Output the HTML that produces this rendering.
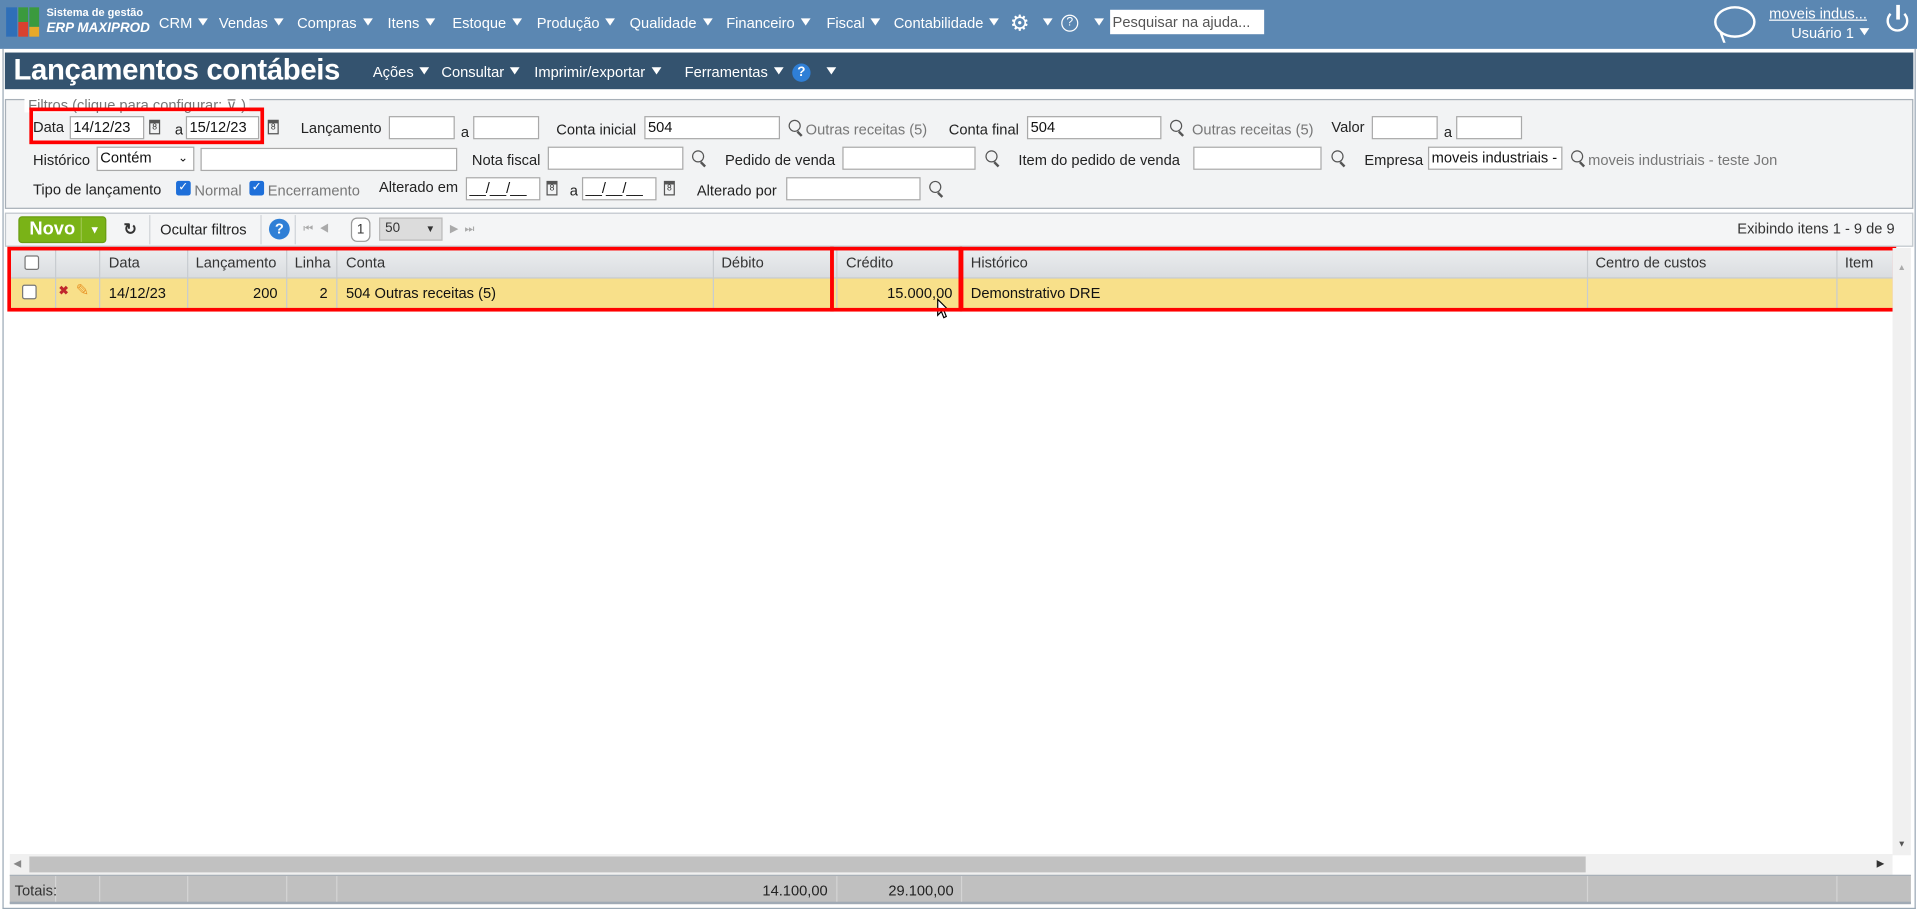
<!DOCTYPE html>
<html><head><meta charset="utf-8"><style>
html,body{margin:0;padding:0;overflow:hidden;width:1917px;height:909px;background:#fff}
#s{position:absolute;left:0;top:0;width:1568px;height:744px;transform:scale(1.22258,1.2218);transform-origin:0 0;font-family:"Liberation Sans",sans-serif;font-size:12px;color:#333;background:#fff}
.a{position:absolute;white-space:nowrap}
.top{left:0;top:0;width:1568px;height:40px;background:#5b87b2}
.m{color:#fff;font-size:12px;top:12px}
.tri{display:inline-block;width:0;height:0;border-left:4px solid transparent;border-right:4px solid transparent;border-top:6px solid #fff;margin-left:5px;vertical-align:2px}
.hdr{left:4px;top:43px;width:1561px;height:30px;background:#34536f}
.inp{position:absolute;height:19px;background:#fff;border:1px solid #a9a9a9;box-sizing:border-box;font-size:12px;line-height:17px;padding-left:2px;color:#111}
.l{font-size:12px;color:#222}
.g{color:#777}
.mg{position:absolute;width:8px;height:8px;border:1.5px solid #555;border-radius:50%}
.mg:after{content:"";position:absolute;left:7px;top:8px;width:2px;height:5px;background:#555;transform:rotate(-45deg)}
.cal{position:absolute;width:9px;height:12px;border:1px solid #555;border-top:3px solid #555;box-sizing:border-box;font-size:7px;line-height:8px;text-align:center;color:#333}
.cb{position:absolute;width:12px;height:12px;background:#1e6fd9;border-radius:2px;color:#fff;font-size:10px;line-height:12px;text-align:center}
.th{position:absolute;top:203px;height:25px;line-height:25px;font-size:12px;color:#333}
.vl{position:absolute;width:1px;background:#c8ccd0}
.red{position:absolute;border:3px solid #f00;box-sizing:border-box}
</style></head><body><div id="s">
<div class="a top"></div>
<div class="a" style="left:5px;top:6px;width:9px;height:24px;background:#2f6fb8"></div>
<div class="a" style="left:15px;top:6px;width:8px;height:12px;background:#3b9a3e"></div>
<div class="a" style="left:15px;top:18px;width:8px;height:12px;background:#d9412f"></div>
<div class="a" style="left:24px;top:6px;width:8px;height:16px;background:#3b9a3e"></div>
<div class="a" style="left:24px;top:22px;width:8px;height:8px;background:#e8a92a"></div>
<div class="a" style="left:38px;top:5px;color:#fff;font-size:9px;font-weight:bold">Sistema de gestão</div>
<div class="a" style="left:38px;top:17px;color:#fff;font-size:11px;font-weight:bold;font-style:italic">ERP MAXIPROD</div>
<div class="a m" style="left:130px">CRM<span class="tri"></span></div>
<div class="a m" style="left:179px">Vendas<span class="tri"></span></div>
<div class="a m" style="left:243px">Compras<span class="tri"></span></div>
<div class="a m" style="left:317px">Itens<span class="tri"></span></div>
<div class="a m" style="left:370px">Estoque<span class="tri"></span></div>
<div class="a m" style="left:439px">Produção<span class="tri"></span></div>
<div class="a m" style="left:515px">Qualidade<span class="tri"></span></div>
<div class="a m" style="left:594px">Financeiro<span class="tri"></span></div>
<div class="a m" style="left:676px">Fiscal<span class="tri"></span></div>
<div class="a m" style="left:731px">Contabilidade<span class="tri"></span></div>
<div class="a" style="left:826px;top:9px;color:#fff;font-size:18px">⚙</div>
<div class="a m" style="left:848px"><span class="tri"></span></div>
<div class="a" style="left:868px;top:12px;width:12px;height:12px;border:1.5px solid #fff;border-radius:50%;color:#fff;font-size:10px;line-height:12px;text-align:center">?</div>
<div class="a m" style="left:890px"><span class="tri"></span></div>
<div class="a" style="left:908px;top:8px;width:126px;height:20px;background:#fff;font-size:12px;line-height:20px;color:#555;padding-left:2px;box-sizing:border-box">Pesquisar na ajuda...</div>
<div class="a" style="left:1402px;top:5px;width:34px;height:26px;border:2px solid #fff;border-radius:50%;box-sizing:border-box"></div>
<div class="a" style="left:1408px;top:27px;width:6px;height:8px;border-left:2px solid #fff;transform:skewX(20deg)"></div>
<div class="a" style="left:1447px;top:4px;color:#fff;font-size:12px;text-decoration:underline">moveis indus...</div>
<div class="a m" style="left:1465px;top:20px">Usuário 1<span class="tri"></span></div>
<div class="a" style="left:1543px;top:8px;width:18px;height:18px;border:2.5px solid #fff;border-top-color:transparent;border-radius:50%;box-sizing:border-box"></div>
<div class="a" style="left:1551px;top:4px;width:3px;height:12px;background:#fff"></div>
<div class="a" style="left:2px;top:40px;width:1563px;height:703px;border:1px solid #9aa8b5;border-top:none"></div>
<div class="a hdr"></div>
<div class="a" style="left:11px;top:44px;color:#fff;font-size:24px;font-weight:bold;letter-spacing:-0.3px">Lançamentos contábeis</div>
<div class="a m" style="left:305px;top:52px;font-size:12px">Ações<span class="tri"></span></div>
<div class="a m" style="left:361px;top:52px;font-size:12px">Consultar<span class="tri"></span></div>
<div class="a m" style="left:437px;top:52px;font-size:12px">Imprimir/exportar<span class="tri"></span></div>
<div class="a m" style="left:560px;top:52px;font-size:12px">Ferramentas<span class="tri"></span></div>
<div class="a" style="left:648px;top:52px;width:15px;height:15px;background:#2f7fd6;border-radius:50%;color:#fff;font-size:11px;font-weight:bold;line-height:15px;text-align:center">?</div>
<div class="a m" style="left:671px;top:52px"><span class="tri"></span></div>
<div class="a" style="left:4px;top:81px;width:1561px;height:90px;background:#f2f3f4;border:1px solid #a8b0b8;box-sizing:border-box"></div>
<div class="a" style="left:20px;top:80px;background:#fff;color:#777;font-size:12px;padding:0 3px;line-height:12px">Filtros (clique para configurar: ⊽ )</div>
<div class="a l" style="left:27px;top:97px">Data</div>
<div class="inp" style="left:57px;top:95px;width:61px">14/12/23</div>
<div class="cal" style="left:122px;top:98px">8</div>
<div class="a l" style="left:143px;top:99px">a</div>
<div class="inp" style="left:152px;top:95px;width:60px">15/12/23</div>
<div class="cal" style="left:219px;top:98px">8</div>
<div class="a l" style="left:246px;top:98px">Lançamento</div>
<div class="inp" style="left:318px;top:95px;width:54px"></div>
<div class="a l" style="left:377px;top:101px">a</div>
<div class="inp" style="left:387px;top:95px;width:54px"></div>
<div class="a l" style="left:455px;top:99px">Conta inicial</div>
<div class="inp" style="left:527px;top:95px;width:111px">504</div>
<div class="mg" style="left:645px;top:98px"></div>
<div class="a g" style="left:659px;top:99px">Outras receitas (5)</div>
<div class="a l" style="left:776px;top:99px">Conta final</div>
<div class="inp" style="left:840px;top:95px;width:110px">504</div>
<div class="mg" style="left:957px;top:98px"></div>
<div class="a g" style="left:975px;top:99px">Outras receitas (5)</div>
<div class="a l" style="left:1089px;top:97px">Valor</div>
<div class="inp" style="left:1122px;top:95px;width:54px"></div>
<div class="a l" style="left:1181px;top:101px">a</div>
<div class="inp" style="left:1191px;top:95px;width:54px"></div>
<div class="a l" style="left:27px;top:124px">Histórico</div>
<div class="inp" style="left:79px;top:120px;width:80px;height:20px">Contém<span style="position:absolute;right:4px;font-size:10px">⌄</span></div>
<div class="inp" style="left:164px;top:121px;width:210px"></div>
<div class="a l" style="left:386px;top:124px">Nota fiscal</div>
<div class="inp" style="left:448px;top:120px;width:111px"></div>
<div class="mg" style="left:566px;top:123px"></div>
<div class="a l" style="left:593px;top:124px">Pedido de venda</div>
<div class="inp" style="left:689px;top:120px;width:109px"></div>
<div class="mg" style="left:806px;top:123px"></div>
<div class="a l" style="left:833px;top:124px">Item do pedido de venda</div>
<div class="inp" style="left:976px;top:120px;width:105px"></div>
<div class="mg" style="left:1089px;top:123px"></div>
<div class="a l" style="left:1116px;top:124px">Empresa</div>
<div class="inp" style="left:1168px;top:120px;width:110px;overflow:hidden">moveis industriais -</div>
<div class="mg" style="left:1285px;top:123px"></div>
<div class="a g" style="left:1299px;top:124px">moveis industriais - teste Jon</div>
<div class="a l" style="left:27px;top:148px">Tipo de lançamento</div>
<div class="cb" style="left:144px;top:148px">✓</div>
<div class="a g" style="left:159px;top:149px">Normal</div>
<div class="cb" style="left:204px;top:148px">✓</div>
<div class="a g" style="left:219px;top:149px">Encerramento</div>
<div class="a l" style="left:310px;top:146px">Alterado em</div>
<div class="inp" style="left:381px;top:145px;width:61px">__/__/__</div>
<div class="cal" style="left:447px;top:148px">8</div>
<div class="a l" style="left:466px;top:149px">a</div>
<div class="inp" style="left:476px;top:145px;width:61px">__/__/__</div>
<div class="cal" style="left:543px;top:148px">8</div>
<div class="a l" style="left:570px;top:149px">Alterado por</div>
<div class="inp" style="left:643px;top:145px;width:110px"></div>
<div class="mg" style="left:760px;top:148px"></div>
<div class="a" style="left:4px;top:174px;width:1561px;height:28px;background:#f4f5f6;border:1px solid #c0c6cc;box-sizing:border-box"></div>
<div class="a" style="left:15px;top:177px;width:72px;height:22px;background:#7ab317;border-radius:3px;border:1px solid #6a9c12;box-sizing:border-box"></div>
<div class="a" style="left:24px;top:179px;color:#fff;font-size:15px;font-weight:bold">Novo</div>
<div class="a" style="left:66px;top:178px;width:1px;height:20px;background:#9cc64a"></div>
<div class="a" style="left:73px;top:183px;color:#fff;font-size:9px">▼</div>
<div class="a" style="left:101px;top:180px;color:#333;font-size:13px;font-weight:bold">↻</div>
<div class="a" style="left:122px;top:176px;width:1px;height:24px;background:#d0d4d8"></div>
<div class="a" style="left:131px;top:181px;color:#222">Ocultar filtros</div>
<div class="a" style="left:213px;top:176px;width:1px;height:24px;background:#d0d4d8"></div>
<div class="a" style="left:220px;top:179px;width:17px;height:17px;background:#2f7fd6;border-radius:50%;color:#fff;font-size:12px;font-weight:bold;line-height:17px;text-align:center">?</div>
<div class="a" style="left:241px;top:176px;width:1px;height:24px;background:#d0d4d8"></div>
<div class="a" style="left:248px;top:182px;color:#aaa;font-size:9px">⏮ &nbsp;◀</div>
<div class="a" style="left:287px;top:178px;width:16px;height:20px;border:1px solid #999;border-radius:5px;background:#fff;box-sizing:border-box;text-align:center;line-height:18px;font-size:11px">1</div>
<div class="a" style="left:310px;top:178px;width:52px;height:19px;background:#dcdcdc;border:1px solid #bbb;box-sizing:border-box;padding-left:4px;line-height:17px;font-size:11px">50<span style="position:absolute;right:5px;font-size:8px">▼</span></div>
<div class="a" style="left:368px;top:182px;color:#aaa;font-size:9px">▶ &nbsp;⏭</div>
<div class="a" style="left:1421px;top:180px;color:#333;font-size:12px">Exibindo itens 1 - 9 de 9</div>
<div class="a" style="left:8px;top:203px;width:1540px;height:25px;background:linear-gradient(#eceef0,#dadde0);border-bottom:1px solid #c0c5ca;box-sizing:border-box"></div>
<div class="a" style="left:8px;top:228px;width:1540px;height:24px;background:#f8e08a"></div>
<div class="vl" style="left:45px;top:203px;height:49px"></div>
<div class="vl" style="left:81px;top:203px;height:49px"></div>
<div class="vl" style="left:153px;top:203px;height:49px"></div>
<div class="vl" style="left:234px;top:203px;height:49px"></div>
<div class="vl" style="left:275px;top:203px;height:49px"></div>
<div class="vl" style="left:583px;top:203px;height:49px"></div>
<div class="vl" style="left:684px;top:203px;height:49px"></div>
<div class="vl" style="left:786px;top:203px;height:49px"></div>
<div class="vl" style="left:1298px;top:203px;height:49px"></div>
<div class="vl" style="left:1502px;top:203px;height:49px"></div>
<div class="a" style="left:20px;top:209px;width:12px;height:12px;border:1px solid #777;border-radius:2px;background:#fff;box-sizing:border-box"></div>
<div class="th" style="left:89px">Data</div>
<div class="th" style="left:160px">Lançamento</div>
<div class="th" style="left:241px">Linha</div>
<div class="th" style="left:283px">Conta</div>
<div class="th" style="left:590px">Débito</div>
<div class="th" style="left:692px">Crédito</div>
<div class="th" style="left:794px">Histórico</div>
<div class="th" style="left:1305px">Centro de custos</div>
<div class="th" style="left:1509px;width:39px;overflow:hidden">Item do</div>
<div class="a" style="left:18px;top:233px;width:12px;height:12px;border:1px solid #777;border-radius:2px;background:#fff;box-sizing:border-box"></div>
<div class="a" style="left:48px;top:233px;color:#c0282d;font-size:10px;font-weight:bold">✖</div>
<div class="a" style="left:62px;top:230px;color:#e8962a;font-size:13px">✎</div>
<div class="a" style="left:89px;top:233px;color:#111">14/12/23</div>
<div class="a" style="left:153px;top:233px;width:74px;text-align:right;color:#111">200</div>
<div class="a" style="left:234px;top:233px;width:34px;text-align:right;color:#111">2</div>
<div class="a" style="left:283px;top:233px;color:#111">504 Outras receitas (5)</div>
<div class="a" style="left:684px;top:233px;width:95px;text-align:right;color:#111">15.000,00</div>
<div class="a" style="left:794px;top:233px;color:#111">Demonstrativo DRE</div>
<svg class="a" style="left:766px;top:244px" width="12" height="18" viewBox="0 0 12 18"><path d="M1 1 L1 14 L4 11 L6 16 L8 15 L6 10 L10 10 Z" fill="#fff" stroke="#000" stroke-width="1"/></svg>
<div class="red" style="left:24px;top:88px;width:192px;height:30px"></div>
<div class="red" style="left:6px;top:202px;width:676px;height:53px"></div>
<div class="red" style="left:679px;top:202px;width:108px;height:53px"></div>
<div class="red" style="left:785px;top:202px;width:766px;height:53px"></div>
<div class="a" style="left:1548px;top:203px;width:15px;height:497px;background:#f0f0f0"></div>
<div class="a" style="left:1552px;top:216px;color:#aaa;font-size:7px">▲</div>
<div class="a" style="left:1552px;top:688px;color:#555;font-size:7px">▼</div>
<div class="a" style="left:8px;top:699px;width:1540px;height:17px;background:#f0f0f0"></div>
<div class="a" style="left:24px;top:701px;width:1273px;height:13px;background:#c1c1c1"></div>
<div class="a" style="left:11px;top:702px;color:#888;font-size:8px">◀</div>
<div class="a" style="left:1535px;top:702px;color:#333;font-size:8px">▶</div>
<div class="a" style="left:8px;top:716px;width:1555px;height:24px;background:#c0c0c0;border-top:1px solid #a8b0b8;border-bottom:2px solid #a0aab5;box-sizing:border-box"></div>
<div class="vl" style="left:45px;top:717px;height:21px;background:#d4d4d4"></div>
<div class="vl" style="left:81px;top:717px;height:21px;background:#d4d4d4"></div>
<div class="vl" style="left:153px;top:717px;height:21px;background:#d4d4d4"></div>
<div class="vl" style="left:234px;top:717px;height:21px;background:#d4d4d4"></div>
<div class="vl" style="left:275px;top:717px;height:21px;background:#d4d4d4"></div>
<div class="vl" style="left:684px;top:717px;height:21px;background:#d4d4d4"></div>
<div class="vl" style="left:786px;top:717px;height:21px;background:#d4d4d4"></div>
<div class="vl" style="left:1298px;top:717px;height:21px;background:#d4d4d4"></div>
<div class="vl" style="left:1502px;top:717px;height:21px;background:#d4d4d4"></div>
<div class="a" style="left:12px;top:722px;color:#333">Totais:</div>
<div class="a" style="left:583px;top:722px;width:94px;text-align:right;color:#222">14.100,00</div>
<div class="a" style="left:684px;top:722px;width:96px;text-align:right;color:#222">29.100,00</div>
</div></body></html>
